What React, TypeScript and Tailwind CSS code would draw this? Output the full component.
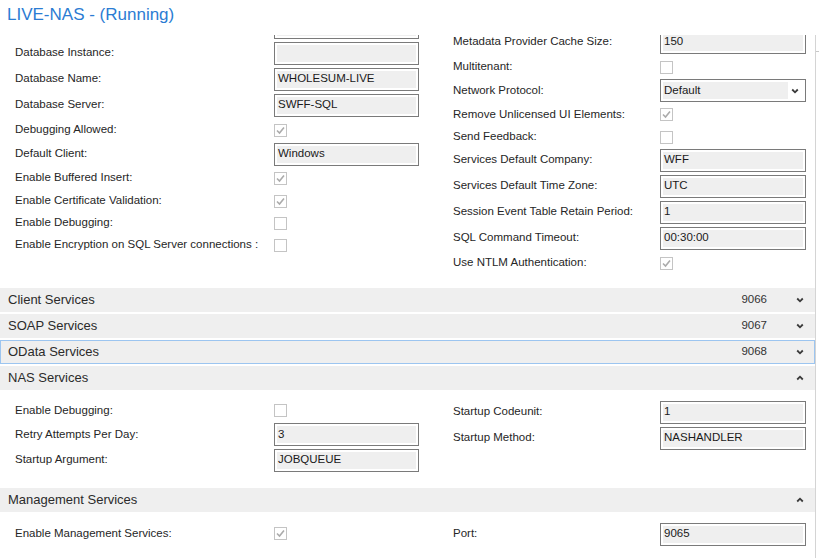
import React from 'react';

type Field =
  | { label: string; h: number; kind: 'text'; value: string }
  | { label: string; h: number; kind: 'check'; checked: boolean }
  | { label: string; h: number; kind: 'select'; value: string };

const leftTop: Field[] = [
  { label: '', h: 26, kind: 'text', value: '' },
  { label: 'Database Instance:', h: 26, kind: 'text', value: '' },
  { label: 'Database Name:', h: 26, kind: 'text', value: 'WHOLESUM-LIVE' },
  { label: 'Database Server:', h: 26, kind: 'text', value: 'SWFF-SQL' },
  { label: 'Debugging Allowed:', h: 24, kind: 'check', checked: true },
  { label: 'Default Client:', h: 24, kind: 'text', value: 'Windows' },
  { label: 'Enable Buffered Insert:', h: 24, kind: 'check', checked: true },
  { label: 'Enable Certificate Validation:', h: 22, kind: 'check', checked: true },
  { label: 'Enable Debugging:', h: 22, kind: 'check', checked: false },
  { label: 'Enable Encryption on SQL Server connections :', h: 22, kind: 'check', checked: false },
];

const rightTop: Field[] = [
  { label: 'Metadata Provider Cache Size:', h: 26, kind: 'text', value: '150' },
  { label: 'Multitenant:', h: 24, kind: 'check', checked: false },
  { label: 'Network Protocol:', h: 23, kind: 'select', value: 'Default' },
  { label: 'Remove Unlicensed UI Elements:', h: 25, kind: 'check', checked: true },
  { label: 'Send Feedback:', h: 20, kind: 'check', checked: false },
  { label: 'Services Default Company:', h: 26, kind: 'text', value: 'WFF' },
  { label: 'Services Default Time Zone:', h: 26, kind: 'text', value: 'UTC' },
  { label: 'Session Event Table Retain Period:', h: 26, kind: 'text', value: '1' },
  { label: 'SQL Command Timeout:', h: 26, kind: 'text', value: '00:30:00' },
  { label: 'Use NTLM Authentication:', h: 24, kind: 'check', checked: true },
];

const nasLeft: Field[] = [
  { label: 'Enable Debugging:', h: 23, kind: 'check', checked: false },
  { label: 'Retry Attempts Per Day:', h: 25, kind: 'text', value: '3' },
  { label: 'Startup Argument:', h: 26, kind: 'text', value: 'JOBQUEUE' },
];

const nasRight: Field[] = [
  { label: 'Startup Codeunit:', h: 26, kind: 'text', value: '1' },
  { label: 'Startup Method:', h: 26, kind: 'text', value: 'NASHANDLER' },
];

function Chevron({ up }: { up?: boolean }) {
  return (
    <svg width="8" height="6" viewBox="0 0 8 6" className="shrink-0">
      <path
        d={up ? 'M1.2 4.5 L4 1.7 L6.8 4.5' : 'M1.2 1.5 L4 4.3 L6.8 1.5'}
        fill="none"
        stroke="#3a3a3a"
        strokeWidth="1.8"
      />
    </svg>
  );
}

function CheckBox({ checked }: { checked: boolean }) {
  return (
    <div className="flex h-[13px] w-[13px] items-center justify-center border border-[#c4c4c4] bg-white">
      {checked && (
        <svg width="11" height="11" viewBox="0 0 11 11">
          <path d="M2 5.5 L4.5 8 L9 2.5" fill="none" stroke="#ababab" strokeWidth="1.6" />
        </svg>
      )}
    </div>
  );
}

function Control({ f, w }: { f: Field; w: string }) {
  if (f.kind === 'check') return <CheckBox checked={f.checked} />;
  return (
    <div className={`flex h-[23px] ${w} border border-[#7a7a7a] bg-white p-[2px]`}>
      <div
        className={`flex h-full items-center bg-[#efefef] pl-[1px] text-[11.5px] text-[#1a1a1a] ${
          f.kind === 'select' ? 'w-[125px]' : 'flex-1'
        }`}
      >
        {f.value}
      </div>
      {f.kind === 'select' && (
        <div className="flex flex-1 items-center justify-end pr-[4px]">
          <Chevron />
        </div>
      )}
    </div>
  );
}

function Column({ rows, labelW, boxW }: { rows: Field[]; labelW: string; boxW: string }) {
  return (
    <div className="flex flex-col">
      {rows.map((f, i) => (
        <div key={i} className="flex items-center" style={{ height: f.h }}>
          <div className={`${labelW} shrink-0 text-[11.5px] text-[#262626]`}>{f.label}</div>
          <Control f={f} w={boxW} />
        </div>
      ))}
    </div>
  );
}

function TwoCols({ left, right, className }: { left: Field[]; right: Field[]; className: string }) {
  return (
    <div className={`flex ${className}`}>
      <div className="w-[453px] shrink-0 pl-[15px]">
        <Column rows={left} labelW="w-[259px]" boxW="w-[145px]" />
      </div>
      <div>
        <Column rows={right} labelW="w-[207px]" boxW="w-[146px]" />
      </div>
    </div>
  );
}

function SectionHeader({
  title,
  port,
  open,
  focused,
}: {
  title: string;
  port?: string;
  open?: boolean;
  focused?: boolean;
}) {
  return (
    <div
      className={`mt-[2px] flex h-[24px] items-center bg-[#efefef] ${
        focused ? 'border border-[#9cc5f0] pl-[7px] pr-[10px]' : 'pl-[8px] pr-[11px]'
      }`}
    >
      <span className="flex-1 text-[13px] text-[#2b2b2b]">{title}</span>
      {port && <span className="mr-[29px] text-[11.5px] text-[#333]">{port}</span>}
      <Chevron up={open} />
    </div>
  );
}

export default function App() {
  return (
    <div
      className="h-[558px] w-[819px] overflow-hidden bg-white"
      style={{ fontFamily: '"Liberation Sans", Arial, sans-serif' }}
    >
      <div className="h-[35px] pl-[7px] pt-[3px] text-[17px] leading-[24px] text-[#2b7cd3]">
        LIVE-NAS - (Running)
      </div>
      <div className="flex h-[523px]">
        <div className="w-[816px] overflow-hidden border-r border-[#d4d4d4]">
          <div className="-mt-[21px]">
            <div className="flex pb-[13px]">
              <div className="w-[453px] shrink-0 pl-[15px]">
                <Column rows={leftTop} labelW="w-[259px]" boxW="w-[145px]" />
              </div>
              <div className="pt-[15px]">
                <Column rows={rightTop} labelW="w-[207px]" boxW="w-[146px]" />
              </div>
            </div>
            <div className="-mt-[2px]">
              <SectionHeader title="Client Services" port="9066" />
              <SectionHeader title="SOAP Services" port="9067" />
              <SectionHeader title="OData Services" port="9068" focused />
              <SectionHeader title="NAS Services" open />
              <TwoCols left={nasLeft} right={nasRight} className="h-[96px] pt-[9px]" />
              <SectionHeader title="Management Services" open />
              <TwoCols
                left={[{ label: 'Enable Management Services:', h: 25, kind: 'check', checked: true }]}
                right={[{ label: 'Port:', h: 26, kind: 'text', value: '9065' }]}
                className="pt-[9px]"
              />
            </div>
          </div>
        </div>
        <div className="flex-1">
          <div className="mt-[16px] border-t border-[#c8c8c8]" />
        </div>
      </div>
    </div>
  );
}
